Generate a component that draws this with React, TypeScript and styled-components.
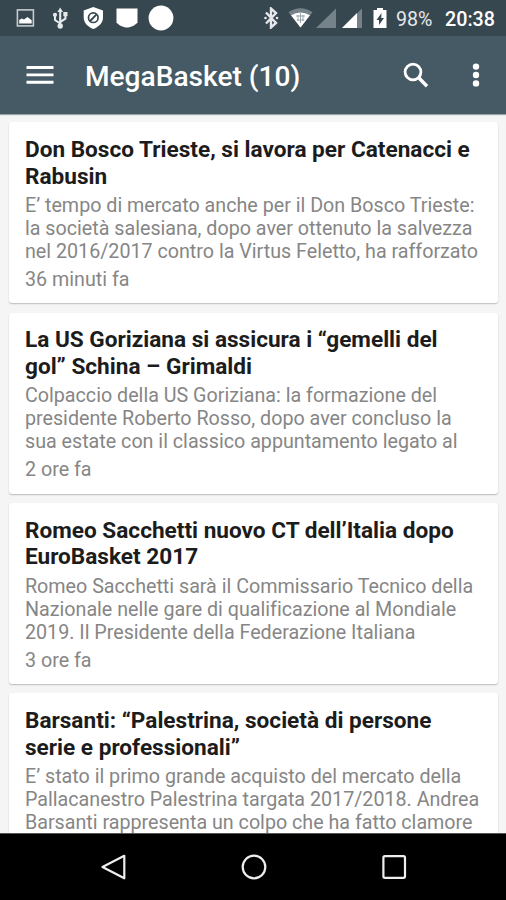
import React from "react";
import styled, { createGlobalStyle } from "styled-components";

const GlobalStyle = createGlobalStyle`
  * { box-sizing: border-box; }
  body { margin: 0; background: #f5f5f5; font-family: Roboto, "Liberation Sans", sans-serif; }
`;

const Screen = styled.div`
  width: 506px;
  height: 900px;
  display: flex;
  flex-direction: column;
  overflow: hidden;
  background: #f5f5f5;
`;

const StatusBar = styled.header`
  flex: 0 0 36px;
  display: flex;
  align-items: center;
  justify-content: space-between;
  padding: 0 11px 0 16px;
  background: #37474f;
  color: #fff;
`;

const StatusGroup = styled.div`
  display: flex;
  align-items: center;
`;

const Glyph = styled.svg<{ $gap?: number }>`
  display: block;
  flex: none;
  margin-left: ${({ $gap = 0 }) => $gap}px;
`;

const Battery = styled.span`
  margin-left: 9px;
  width: 38px;
  white-space: nowrap;
  font-size: 19.6px;
  line-height: 32px;
  color: #e4e8ea;
  padding-top: 3px;
`;

const Clock = styled.span`
  margin-left: 11px;
  width: 50px;
  white-space: nowrap;
  font-size: 19.7px;
  font-weight: 500;
  line-height: 32px;
  padding-top: 3px;
`;

const Toolbar = styled.nav`
  flex: 0 0 78px;
  display: flex;
  align-items: center;
  padding: 0 26px 0 26px;
  background: #455a64;
  color: #fff;
  box-shadow: 0 1px 1px #9aa5aa;
  z-index: 1;
`;

const ToolbarTitle = styled.h1`
  flex: 1;
  margin: 3px 0 0 31px;
  font-size: 28.1px;
  font-weight: 500;
  line-height: 34px;
  white-space: nowrap;
`;

const IconButton = styled.button`
  display: flex;
  padding: 0;
  border: 0;
  background: none;
  color: inherit;
  & + & { margin-left: 35px; }
`;

const Feed = styled.main`
  flex: 1;
  min-height: 0;
  overflow: hidden;
  display: flex;
  flex-direction: column;
  gap: 9.3px;
  padding: 8.4px 7.6px 0 8.6px;
`;

const Card = styled.article`
  flex: 0 0 181px;
  padding: 14.8px 16px 0 16.4px;
  border-radius: 3px;
  background: #fff;
  box-shadow: 0 1px 1.5px rgba(0, 0, 0, 0.24);
  white-space: nowrap;
`;

const Headline = styled.h2`
  margin: 0;
  font-size: 22.6px;
  font-weight: 700;
  line-height: 26.6px;
  color: #1c1c1c;
`;

const Excerpt = styled.p`
  margin: 3.6px 0 0;
  font-size: 19.7px;
  line-height: 23px;
  letter-spacing: -0.002px;
  color: #868686;
`;

const Age = styled.time`
  display: block;
  margin-top: 5px;
  font-size: 19.7px;
  line-height: 23px;
  color: #868686;
`;

const Line = styled.span`
  display: block;
`;

const NavBar = styled.footer`
  flex: 0 0 67px;
  display: flex;
  align-items: center;
  justify-content: center;
  gap: 112.5px;
  padding-left: 1px;
  background: #000;
  border-top: 1px solid #555;
`;

interface Article {
  headline: string[];
  excerpt: string[];
  age?: string;
}

const articles: Article[] = [
  {
    headline: ["Don Bosco Trieste, si lavora per Catenacci e", "Rabusin"],
    excerpt: [
      "E’ tempo di mercato anche per il Don Bosco Trieste:",
      "la società salesiana, dopo aver ottenuto la salvezza",
      "nel 2016/2017 contro la Virtus Feletto, ha rafforzato",
    ],
    age: "36 minuti fa",
  },
  {
    headline: ["La US Goriziana si assicura i “gemelli del", "gol” Schina – Grimaldi"],
    excerpt: [
      "Colpaccio della US Goriziana: la formazione del",
      "presidente Roberto Rosso, dopo aver concluso la",
      "sua estate con il classico appuntamento legato al",
    ],
    age: "2 ore fa",
  },
  {
    headline: ["Romeo Sacchetti nuovo CT dell’Italia dopo", "EuroBasket 2017"],
    excerpt: [
      "Romeo Sacchetti sarà il Commissario Tecnico della",
      "Nazionale nelle gare di qualificazione al Mondiale",
      "2019. Il Presidente della Federazione Italiana",
    ],
    age: "3 ore fa",
  },
  {
    headline: ["Barsanti: “Palestrina, società di persone", "serie e professionali”"],
    excerpt: [
      "E’ stato il primo grande acquisto del mercato della",
      "Pallacanestro Palestrina targata 2017/2018. Andrea",
      "Barsanti rappresenta un colpo che ha fatto clamore",
    ],
  },
];

const PictureIcon = () => (
  <Glyph width="19" height="20" viewBox="0 0 19 20">
    <rect x="1.4" y="1.9" width="16" height="16" fill="none" stroke="#c5cbce" strokeWidth="1.6" />
    <path d="M3.2 15.5V12l2.5-1.6 2.3 1.2 3.4-2.5 4.3 3.1v3.3Z" fill="#fff" />
  </Glyph>
);

const UsbIcon = () => (
  <Glyph $gap={17} width="17" height="24" viewBox="0 0 17 24">
    <g fill="none" stroke="#e5e9eb" strokeWidth="2.1">
      <path d="M8.2 4v16M8.2 17.5 3 14V8.5M8.2 16l5.2-3.3V7.5" />
    </g>
    <g fill="#e5e9eb">
      <path d="M8.2 1.5 11 6H5.4Z" />
      <circle cx="3" cy="8.8" r="2.1" />
      <path d="M11.3 6h4.2v4.2h-4.2Z" />
      <circle cx="8.2" cy="20" r="2.7" />
    </g>
  </Glyph>
);

const ShieldIcon = () => (
  <Glyph $gap={14} width="21" height="24" viewBox="0 0 21 24">
    <path d="M10.3 1 20 4.4v7.1c0 5.4-4.2 9.3-9.7 11.6C4.8 20.8.7 16.9.7 11.5V4.4Z" fill="#fff" />
    <circle cx="10.3" cy="11.7" r="4.8" fill="none" stroke="#37474f" strokeWidth="1.7" />
    <path d="m7.2 15 6.3-6.6" stroke="#37474f" strokeWidth="1.9" />
  </Glyph>
);

const PocketIcon = () => (
  <Glyph $gap={12} width="22" height="20" viewBox="0 0 22 20">
    <path d="M.5.5h21V14.500c-2 2.500-6.500 5-10.500 5S2.500 17 .5 14.500Z" fill="#fff" />
  </Glyph>
);

const DotIcon = () => (
  <Glyph $gap={9.5} width="26" height="26" viewBox="0 0 26 26">
    <circle cx="13" cy="13" r="12.4" fill="#fff" />
  </Glyph>
);

const BluetoothIcon = () => (
  <Glyph width="15" height="22" viewBox="0 0 15 22">
    <path d="M2 5.5 12 16l-5 4.5V1.5L12 6 2 16.5" fill="none" stroke="#e5e9eb" strokeWidth="2.4" />
    <circle cx="1.5" cy="11" r="1.3" fill="#e5e9eb" />
    <circle cx="13" cy="11" r="1.3" fill="#e5e9eb" />
  </Glyph>
);

const WifiIcon = () => (
  <Glyph $gap={9.5} width="25" height="22" viewBox="0 0 25 22">
    <path d="M.5 5.3Q12.500-2.700 24.500 5.300L12.500 20.500Z" fill="#75828a" />
    <path d="M3 8.300Q12.500 2.500 22 8.300L12.500 20.500Z" fill="#fff" />
    <path d="M12.500 6v10M8 9h9M8.800 13h7.500M10 8v6M15 8v6" stroke="#89949a" strokeWidth=".8" fill="none" />
  </Glyph>
);

const EmptySignalIcon = () => (
  <Glyph $gap={2.5} width="20" height="21" viewBox="0 0 20 21">
    <path d="M20 .5V20H0Z" fill="#75828a" />
  </Glyph>
);

const SignalIcon = () => (
  <Glyph $gap={6.5} width="20" height="21" viewBox="0 0 20 21">
    <path d="M20 .5V20H0Z" fill="#75828a" />
    <path d="M15 5v15H0Z" fill="#fff" />
  </Glyph>
);

const BatteryIcon = () => (
  <Glyph $gap={11} width="14" height="22" viewBox="0 0 14 22">
    <path d="M4 1h6v2h3.500v18H.5V3H4Z" fill="#fff" />
    <path d="M8.500 6 3.500 13H6v5l5-7H8.200Z" fill="#37474f" />
  </Glyph>
);

const App = () => (
  <Screen>
    <GlobalStyle />
    <StatusBar>
      <StatusGroup>
        <PictureIcon />
        <UsbIcon />
        <ShieldIcon />
        <PocketIcon />
        <DotIcon />
      </StatusGroup>
      <StatusGroup>
        <BluetoothIcon />
        <WifiIcon />
        <EmptySignalIcon />
        <SignalIcon />
        <BatteryIcon />
        <Battery>98%</Battery>
        <Clock>20:38</Clock>
      </StatusGroup>
    </StatusBar>
    <Toolbar>
      <IconButton aria-label="Menu">
        <Glyph width="28" height="20" viewBox="0 0 28 20">
          <path d="M.5 2.500h27M.5 9.900h27M.5 17.300h27" stroke="#fff" strokeWidth="2.900" />
        </Glyph>
      </IconButton>
      <ToolbarTitle>MegaBasket (10)</ToolbarTitle>
      <IconButton aria-label="Search">
        <Glyph width="26" height="27" viewBox="0 0 26 27">
          <circle cx="10" cy="10" r="7.900" fill="none" stroke="#fff" strokeWidth="2.800" />
          <path d="m15.500 15.500 8.500 8.800" stroke="#fff" strokeWidth="3.400" />
        </Glyph>
      </IconButton>
      <IconButton aria-label="More">
        <Glyph $gap={8} width="8" height="26" viewBox="0 0 8 26">
          <g fill="#fff">
            <circle cx="4" cy="4.600" r="3.200" />
            <circle cx="4" cy="13" r="3.200" />
            <circle cx="4" cy="21.400" r="3.200" />
          </g>
        </Glyph>
      </IconButton>
    </Toolbar>
    <Feed>
      {articles.map((article) => (
        <Card key={article.headline[0]}>
          <Headline>
            {article.headline.map((text) => (
              <Line key={text}>{text}</Line>
            ))}
          </Headline>
          <Excerpt>
            {article.excerpt.map((text) => (
              <Line key={text}>{text}</Line>
            ))}
          </Excerpt>
          {article.age && <Age>{article.age}</Age>}
        </Card>
      ))}
    </Feed>
    <NavBar>
      <Glyph width="28" height="28" viewBox="0 0 28 28">
        <path d="M25.300 2.800v22.500L3.500 14Z" fill="none" stroke="#eee" strokeWidth="2.200" strokeLinejoin="round" />
      </Glyph>
      <Glyph width="28" height="28" viewBox="0 0 28 28">
        <circle cx="14" cy="14" r="11.300" fill="none" stroke="#eee" strokeWidth="2.200" />
      </Glyph>
      <Glyph width="28" height="28" viewBox="0 0 28 28">
        <rect x="3.400" y="3.200" width="21.600" height="21.600" rx="1.500" fill="none" stroke="#eee" strokeWidth="2.200" />
      </Glyph>
    </NavBar>
  </Screen>
);

export default App;
